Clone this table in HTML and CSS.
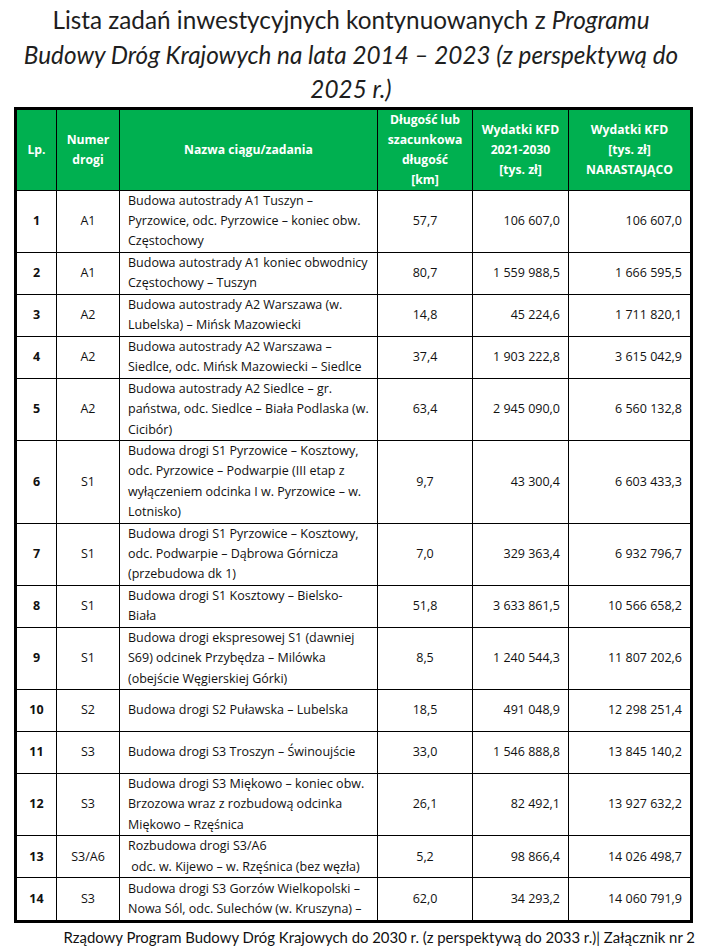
FILE: index.html
```html
<!DOCTYPE html>
<html lang="pl">
<head>
<meta charset="utf-8">
<title>Lista zadań inwestycyjnych</title>
<link rel="stylesheet" href="styles.css">
</head>
<body>
<div class="page">
  <h1 class="title">Lista zadań inwestycyjnych kontynuowanych z <em>Programu<br>Budowy Dróg Krajowych na lata 2014 – 2023 (z perspektywą do<br>2025 r.)</em></h1>
  <table class="grid">
    <thead>
      <tr>
        <th class="c-lp">Lp.</th>
        <th class="c-nr">Numer<br>drogi</th>
        <th class="c-name">Nazwa ciągu/zadania</th>
        <th class="c-len">Długość lub<br>szacunkowa<br>długość<br>[km]</th>
        <th class="c-kfd">Wydatki KFD<br>2021-2030<br>[tys. zł]</th>
        <th class="c-sum">Wydatki KFD<br>[tys. zł]<br>NARASTAJĄCO</th>
      </tr>
    </thead>
    <tbody>
      <tr><td class="lp">1</td><td class="nr">A1</td><td class="name">Budowa autostrady A1 Tuszyn –<br>Pyrzowice, odc. Pyrzowice – koniec obw.<br>Częstochowy</td><td class="len">57,7</td><td class="num">106 607,0</td><td class="num">106 607,0</td></tr>
      <tr><td class="lp">2</td><td class="nr">A1</td><td class="name">Budowa autostrady A1 koniec obwodnicy<br>Częstochowy – Tuszyn</td><td class="len">80,7</td><td class="num">1 559 988,5</td><td class="num">1 666 595,5</td></tr>
      <tr><td class="lp">3</td><td class="nr">A2</td><td class="name">Budowa autostrady A2 Warszawa (w.<br>Lubelska) – Mińsk Mazowiecki</td><td class="len">14,8</td><td class="num">45 224,6</td><td class="num">1 711 820,1</td></tr>
      <tr><td class="lp">4</td><td class="nr">A2</td><td class="name">Budowa autostrady A2 Warszawa –<br>Siedlce, odc. Mińsk Mazowiecki – Siedlce</td><td class="len">37,4</td><td class="num">1 903 222,8</td><td class="num">3 615 042,9</td></tr>
      <tr><td class="lp">5</td><td class="nr">A2</td><td class="name">Budowa autostrady A2 Siedlce – gr.<br>państwa, odc. Siedlce – Biała Podlaska (w.<br>Cicibór)</td><td class="len">63,4</td><td class="num">2 945 090,0</td><td class="num">6 560 132,8</td></tr>
      <tr><td class="lp">6</td><td class="nr">S1</td><td class="name">Budowa drogi S1 Pyrzowice – Kosztowy,<br>odc. Pyrzowice – Podwarpie (III etap z<br>wyłączeniem odcinka I w. Pyrzowice – w.<br>Lotnisko)</td><td class="len">9,7</td><td class="num">43 300,4</td><td class="num">6 603 433,3</td></tr>
      <tr><td class="lp">7</td><td class="nr">S1</td><td class="name">Budowa drogi S1 Pyrzowice – Kosztowy,<br>odc. Podwarpie – Dąbrowa Górnicza<br>(przebudowa dk 1)</td><td class="len">7,0</td><td class="num">329 363,4</td><td class="num">6 932 796,7</td></tr>
      <tr><td class="lp">8</td><td class="nr">S1</td><td class="name">Budowa drogi S1 Kosztowy – Bielsko-<br>Biała</td><td class="len">51,8</td><td class="num">3 633 861,5</td><td class="num">10 566 658,2</td></tr>
      <tr><td class="lp">9</td><td class="nr">S1</td><td class="name">Budowa drogi ekspresowej S1 (dawniej<br>S69) odcinek Przybędza – Milówka<br>(obejście Węgierskiej Górki)</td><td class="len">8,5</td><td class="num">1 240 544,3</td><td class="num">11 807 202,6</td></tr>
      <tr><td class="lp">10</td><td class="nr">S2</td><td class="name">Budowa drogi S2 Puławska – Lubelska</td><td class="len">18,5</td><td class="num">491 048,9</td><td class="num">12 298 251,4</td></tr>
      <tr><td class="lp">11</td><td class="nr">S3</td><td class="name">Budowa drogi S3 Troszyn – Świnoujście</td><td class="len">33,0</td><td class="num">1 546 888,8</td><td class="num">13 845 140,2</td></tr>
      <tr><td class="lp">12</td><td class="nr">S3</td><td class="name">Budowa drogi S3 Miękowo – koniec obw.<br>Brzozowa wraz z rozbudową odcinka<br>Miękowo – Rzęśnica</td><td class="len">26,1</td><td class="num">82 492,1</td><td class="num">13 927 632,2</td></tr>
      <tr><td class="lp">13</td><td class="nr">S3/A6</td><td class="name">Rozbudowa drogi S3/A6<br>&nbsp;odc. w. Kijewo – w. Rzęśnica (bez węzła)</td><td class="len">5,2</td><td class="num">98 866,4</td><td class="num">14 026 498,7</td></tr>
      <tr><td class="lp">14</td><td class="nr">S3</td><td class="name">Budowa drogi S3 Gorzów Wielkopolski –<br>Nowa Sól, odc. Sulechów (w. Kruszyna) –</td><td class="len">62,0</td><td class="num">34 293,2</td><td class="num">14 060 791,9</td></tr>
    </tbody>
  </table>
  <p class="footer">Rządowy Program Budowy Dróg Krajowych do 2030 r. (z perspektywą do 2033 r.)| Załącznik nr 2</p>
</div>
</body>
</html>
```

FILE: styles.css
```css
html, body {
  margin: 0;
  padding: 0;
  background: #ffffff;
}

.page {
  width: 702px;
  height: 948px;
  overflow: hidden;
}

.title {
  margin: 3px 0 0 0;
  font-family: "Lato", "Liberation Sans", sans-serif;
  font-weight: 400;
  font-size: 24.3px;
  line-height: 34.5px;
  text-align: center;
  color: #1e1e1e;
}

.title em {
  font-style: italic;
}

.grid {
  margin: 0 0 0 14px;
  width: 679px;
  box-sizing: border-box;
  table-layout: fixed;
  border-collapse: separate;
  border-spacing: 0;
  border: 3px solid #000;
  font-family: "Open Sans", "Noto Sans", sans-serif;
  font-size: 12.5px;
  color: #111;
}

.grid th,
.grid td {
  box-sizing: border-box;
  border-right: 1px solid #000;
  border-bottom: 1px solid #000;
  padding: 0;
  vertical-align: middle;
}

.grid tr > :last-child {
  border-right: none;
}

.grid tbody tr:last-child td {
  border-bottom: none;
}

.grid th {
  background: #00b050;
  color: #ffffff;
  font-weight: 700;
  font-size: 12.2px;
  line-height: 20px;
  height: 81px;
  text-align: center;
}

.c-lp { width: 40px; }
.c-nr { width: 63px; }
.c-name { width: 258px; }
.c-len { width: 95px; }
.c-kfd { width: 96px; }
.c-sum { width: 121px; }

.grid td {
  height: 42px;
  line-height: 20.4px;
}

.lp {
  text-align: center;
  font-weight: 700;
}

.nr,
.len {
  text-align: center;
}

.name {
  text-align: left;
  padding-left: 8px !important;
  white-space: nowrap;
}

.num {
  text-align: right;
  padding-right: 8px !important;
}

.footer {
  margin: 4px 0 0 0;
  padding-right: 7px;
  text-align: right;
  font-family: "Lato", "Liberation Sans", sans-serif;
  font-size: 14.9px;
  line-height: 20px;
  color: #111;
}
```
